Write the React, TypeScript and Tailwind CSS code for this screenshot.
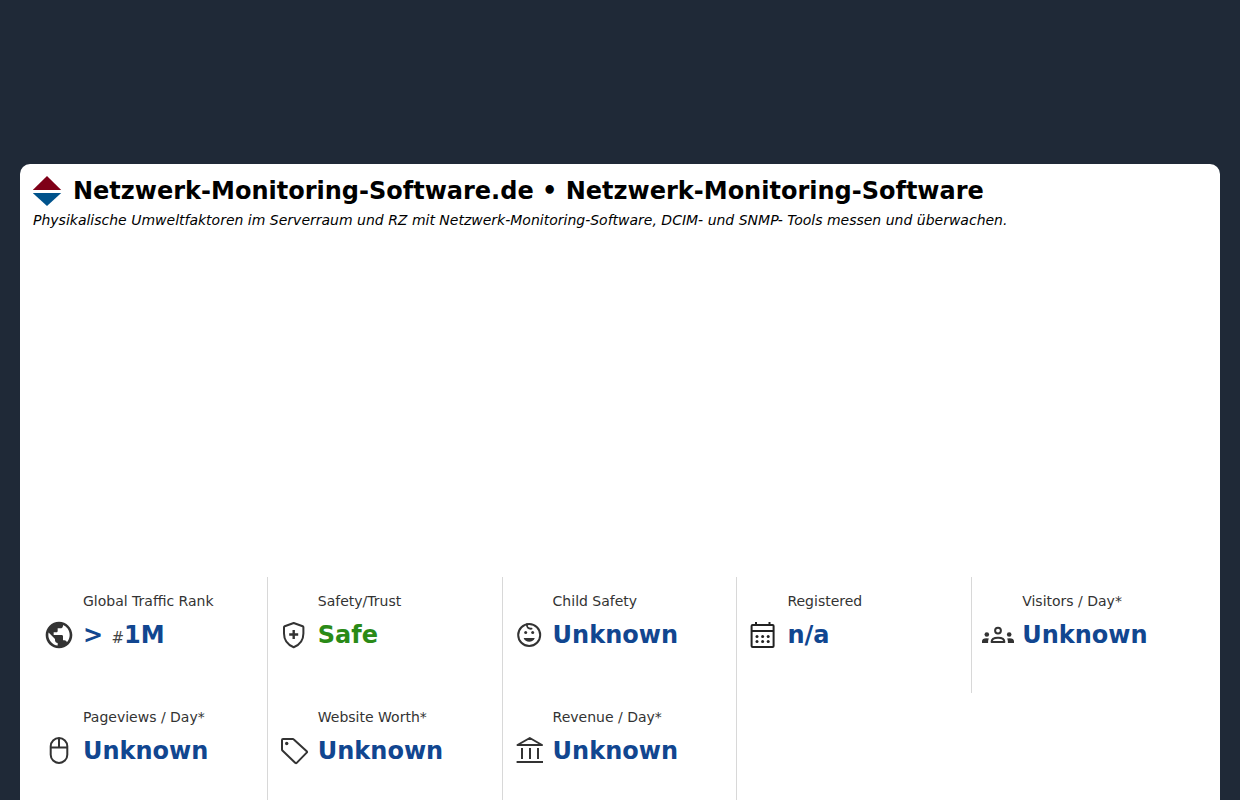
import type { ReactNode } from "react";
import { MdPublic } from "react-icons/md";

function LineIcon({ children }: { children: ReactNode }) {
  return (
    <svg
      className="size-8"
      viewBox="0 0 32 32"
      fill="none"
      stroke="currentColor"
      strokeWidth="2"
      strokeLinejoin="round"
      aria-hidden="true"
    >
      {children}
    </svg>
  );
}

const ShieldIcon = () => (
  <LineIcon>
    <path d="M15.7 4 6.7 7.2C6.2 7.4 6 7.7 6 8.2V14.5C6 21 9.6 25.8 15.7 28.2 21.8 25.8 25.4 21 25.4 14.5V8.2C25.4 7.7 25.2 7.4 24.7 7.2Z" />
    <path d="M15.7 11v9M11.2 15.5h9" strokeWidth="2.4" />
  </LineIcon>
);

const ChildIcon = () => (
  <LineIcon>
    <circle cx="16.2" cy="16" r="11" />
    <path d="M14 5.2C13.4 8.2 15.2 10 18.6 9.7" strokeWidth="1.8" strokeLinecap="round" />
    <circle cx="12.7" cy="13.4" r="1.5" fill="currentColor" stroke="none" />
    <circle cx="19.7" cy="13.4" r="1.5" fill="currentColor" stroke="none" />
    <path d="M10.6 19H21.8C20.8 21.5 18.8 22.8 16.2 22.8S11.6 21.5 10.6 19Z" fill="currentColor" stroke="none" />
  </LineIcon>
);

const CalendarIcon = () => (
  <LineIcon>
    <g className="text-[#222]">
      <rect x="4.6" y="6" width="22" height="22" rx="1" stroke="currentColor" />
      <path d="M4.6 12h22M9 3v3M22.5 3v3" stroke="currentColor" />
      <g fill="currentColor" stroke="none">
        <circle cx="10" cy="17.6" r="1.5" />
        <circle cx="15.6" cy="17.6" r="1.5" />
        <circle cx="21.2" cy="17.6" r="1.5" />
        <circle cx="10" cy="22.4" r="1.5" />
        <circle cx="15.6" cy="22.4" r="1.5" />
        <circle cx="21.2" cy="22.4" r="1.5" />
      </g>
    </g>
  </LineIcon>
);

const GroupIcon = () => (
  <LineIcon>
    <circle cx="16" cy="11.6" r="2.9" />
    <path d="M9.6 23.1C9.6 20.2 12.4 18.7 16 18.7S22.4 20.2 22.4 23.1Z" />
    <g fill="currentColor" stroke="none">
      <circle cx="4.8" cy="15.5" r="2.3" />
      <circle cx="27.2" cy="15.5" r="2.3" />
      <path d="M0 24V22.2C0 20.4 1.6 19.3 4.4 19.3L6.9 19.6C6.4 20.5 6.1 21.5 6.1 24Z" />
      <path d="M32 24V22.2C32 20.4 30.4 19.3 27.6 19.3L25.1 19.6C25.6 20.5 25.9 21.5 25.9 24Z" />
    </g>
  </LineIcon>
);

const MouseIcon = () => (
  <LineIcon>
    <rect x="7.7" y="3" width="16.6" height="25" rx="8.3" />
    <path d="M7.7 12.5h16.6M16 3v9.5" />
  </LineIcon>
);

const TagIcon = () => (
  <LineIcon>
    <path d="M5 4H14.8C15.2 4 15.5 4.1 15.8 4.4L28.7 16.3C29.1 16.7 29.1 17.2 28.7 17.6L18.7 27.9C18.3 28.3 17.8 28.3 17.4 27.9L4.4 15.6C4.1 15.3 4 15 4 14.6V5C4 4.4 4.4 4 5 4Z" />
    <circle cx="8.7" cy="8.5" r="1.7" fill="currentColor" stroke="none" />
  </LineIcon>
);

const BankIcon = () => (
  <LineIcon>
    <path d="M4.5 10 16.8 3 29 10Z" />
    <path d="M9 13v11M17 13v11M25 13v11M3.6 27h26.4" />
  </LineIcon>
);

type Stat = { label: string; value: ReactNode; icon: ReactNode; safe?: boolean };

const stats: Stat[] = [
  {
    label: "Global Traffic Rank",
    value: (
      <>
        &gt; <span className="text-[15px] leading-none font-normal text-[#444]">#</span>1M
      </>
    ),
    icon: <MdPublic className="size-8" aria-hidden="true" />,
  },
  { label: "Safety/Trust", value: "Safe", icon: <ShieldIcon />, safe: true },
  { label: "Child Safety", value: "Unknown", icon: <ChildIcon /> },
  { label: "Registered", value: "n/a", icon: <CalendarIcon /> },
  { label: "Visitors / Day*", value: "Unknown", icon: <GroupIcon /> },
  { label: "Pageviews / Day*", value: "Unknown", icon: <MouseIcon /> },
  { label: "Website Worth*", value: "Unknown", icon: <TagIcon /> },
  { label: "Revenue / Day*", value: "Unknown", icon: <BankIcon /> },
];

function StatCell({ label, value, icon, safe }: Stat) {
  return (
    <div className="border-r border-[#d8d8d8] px-2.5 pt-3.5 pb-[42px] nth-[5n]:border-r-0">
      <dt className="pl-10 text-sm leading-5 text-[#333]">{label}</dt>
      <dd className="mt-2 flex items-center gap-2 text-[#333]">
        {icon}
        <span
          className={
            safe
              ? "text-2xl leading-8 font-bold text-[#2a8a17]"
              : "text-2xl leading-8 font-bold text-[#114690]"
          }
        >
          {value}
        </span>
      </dd>
    </div>
  );
}

export default function App() {
  return (
    <div className="min-h-screen overflow-hidden bg-[#1f2937] px-5 pt-41 font-['DejaVu_Sans',sans-serif]">
      <main className="rounded-[10px] bg-white px-[13px] py-3 text-black">
        <header>
          <h1 className="flex items-center gap-2.5 text-2xl leading-7 font-bold">
            <svg className="size-[30px] shrink-0" viewBox="0 0 30 30" aria-hidden="true">
              <path d="M14 0 28.2 14H-.2Z" fill="#7f0018" />
              <path d="M-.2 17H28.2L14 30Z" fill="#00538c" />
            </svg>
            Netzwerk-Monitoring-Software.de • Netzwerk-Monitoring-Software
          </h1>
          <p className="mt-1 text-sm leading-5 italic">
            Physikalische Umweltfaktoren im Serverraum und RZ mit Netzwerk-Monitoring-Software, DCIM- und SNMP- Tools
            messen und überwachen.
          </p>
        </header>
        <dl className="mt-[347px] grid grid-cols-5">
          {stats.map((stat) => (
            <StatCell key={stat.label} {...stat} />
          ))}
        </dl>
      </main>
    </div>
  );
}
